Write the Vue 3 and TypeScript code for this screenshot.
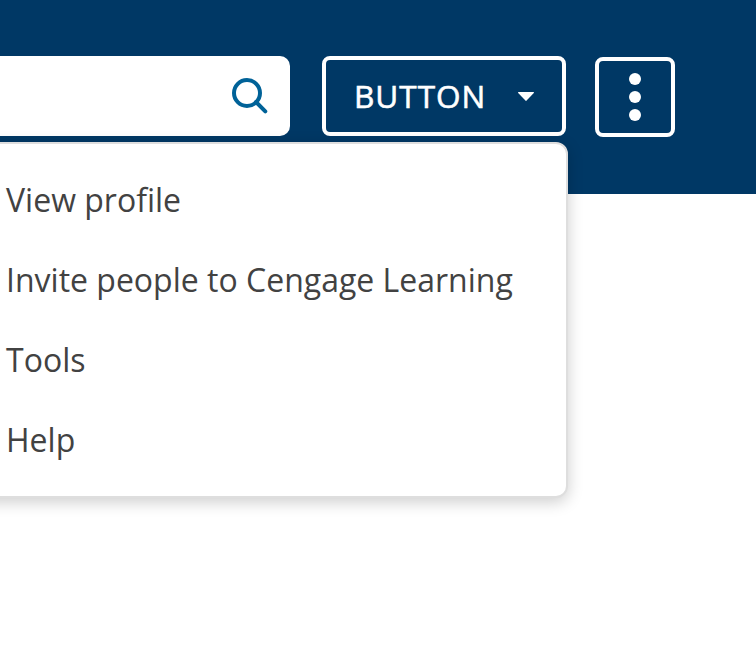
<script setup lang="ts">
import { ref } from 'vue'

const items = ref<string[]>([
  'View profile',
  'Invite people to Cengage Learning',
  'Tools',
  'Help',
])
</script>

<template>
  <div class="page">
    <header class="bar">
      <div class="search">
        <svg class="search-icon" viewBox="0 0 40 40" fill="none">
          <circle cx="17" cy="17" r="13" />
          <path d="M26 26L35.3 35.3" />
        </svg>
      </div>
      <button class="btn">
        <span>BUTTON</span>
        <svg class="caret" viewBox="0 0 18 10"><path d="M1.6 0H16.4Q17.4 0 16.8 1.1L9.6 8.6Q9 9.2 8.4 8.6L1.2 1.1Q.6 0 1.6 0Z" /></svg>
      </button>
      <button class="more" aria-label="More">
        <i></i><i></i><i></i>
      </button>
    </header>
    <ul class="menu">
      <li v-for="item in items" :key="item">{{ item }}</li>
    </ul>
  </div>
</template>

<style>
body {
  margin: 0;
  background: #fff;
}
</style>

<style scoped>
.page {
  position: relative;
  height: 652px;
  overflow: hidden;
  font-family: 'Open Sans', sans-serif;
}
.bar {
  box-sizing: border-box;
  height: 194px;
  padding-top: 56px;
  display: flex;
  align-items: flex-start;
  background: #003865;
}
.search {
  box-sizing: border-box;
  width: 290px;
  height: 80px;
  padding-right: 20px;
  display: flex;
  align-items: center;
  justify-content: flex-end;
  background: #fff;
  border-radius: 0 10px 10px 0;
}
.search-icon {
  width: 40px;
  height: 40px;
  stroke: #006298;
  stroke-width: 4;
  stroke-linecap: round;
}
.btn {
  box-sizing: border-box;
  width: 244px;
  height: 80px;
  margin-left: 32px;
  padding: 0 27px 0 28px;
  display: flex;
  align-items: center;
  justify-content: space-between;
  border: 4px solid #fff;
  border-radius: 8px;
  background: none;
  color: #fff;
  font: 400 31.5px/40px 'Open Sans', sans-serif;
  letter-spacing: 1px;
  -webkit-text-stroke: 0.6px #fff;
}
.caret {
  width: 18px;
  height: 10px;
  margin-top: 2px;
  fill: #fff;
}
.more {
  box-sizing: border-box;
  width: 80px;
  height: 80px;
  margin: 1px 0 0 29px;
  padding: 0;
  display: flex;
  flex-direction: column;
  align-items: center;
  justify-content: center;
  gap: 6px;
  border: 4px solid #fff;
  border-radius: 8px;
  background: none;
}
.more i {
  width: 12px;
  height: 12px;
  border-radius: 50%;
  background: #fff;
}
.menu {
  position: absolute;
  box-sizing: border-box;
  left: -20px;
  top: 142px;
  width: 588px;
  height: 356px;
  margin: 0;
  padding: 16px 0 0 24px;
  list-style: none;
  background: #fff;
  border: 2px solid #dedede;
  border-radius: 12px;
  box-shadow: 0 4px 16px rgba(0, 0, 0, 0.2);
}
.menu li {
  height: 80px;
  color: #424242;
  font-size: 32px;
  line-height: 80px;
  white-space: nowrap;
}
</style>
